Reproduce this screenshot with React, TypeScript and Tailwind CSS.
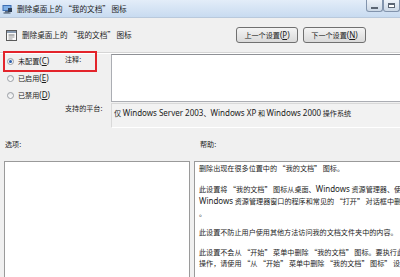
import React from 'react';

// Latin runs are set a little larger than the CJK text, as in the screenshot
const T = ({ children }: { children: string }) => {
  const parts = children.split(/([A-Za-z0-9()][A-Za-z0-9() ]*[A-Za-z0-9()]|[A-Za-z0-9()])/);
  return (
    <>
      {parts.map((s, i) =>
        i % 2 === 1 ? (
          <span key={i} className="font-['Noto_Sans',sans-serif] text-[8px]">
            {s}
          </span>
        ) : (
          <React.Fragment key={i}>{s}</React.Fragment>
        )
      )}
    </>
  );
};

const Radio = ({ checked, label, k }: { checked?: boolean; label: string; k: string }) => (
  <div className="flex h-[14px] items-center gap-[4px]">
    <span className="flex h-[7px] w-[7px] shrink-0 items-center justify-center rounded-full border border-[#9a9ea4] bg-gradient-to-b from-[#e4e6e8] to-[#fdfdfd]">
      {checked && <span className="h-[3px] w-[3px] rounded-full bg-[#2a5fae]" />}
    </span>
    <span className="whitespace-nowrap">
      {label}
      <span className="font-['Noto_Sans',sans-serif] text-[8px]">
        (<span className="underline">{k}</span>)
      </span>
    </span>
  </div>
);

const TitleIcon = () => (
  <svg width="11" height="10" viewBox="0 0 11 10">
    <rect x="0.5" y="1" width="9" height="6" fill="#3d6eb3" />
    <rect x="1.5" y="2" width="7" height="4" fill="#7fb0e6" />
    <rect x="3" y="7" width="4" height="1.5" fill="#5b6b80" />
    <rect x="1.5" y="8.5" width="7" height="1" fill="#3b4a5e" />
    <rect x="6" y="4" width="4" height="4" fill="#2d3f57" />
  </svg>
);

const PolicyIcon = () => (
  <svg width="11" height="11" viewBox="0 0 11 11">
    <rect x="0.5" y="0.5" width="10" height="10" fill="#fbfbfb" stroke="#5a5a5a" />
    <rect x="1" y="1" width="9" height="2" fill="#8a9bb0" />
    <line x1="2.5" y1="5" x2="8.5" y2="5" stroke="#707070" />
    <line x1="2.5" y1="7" x2="8.5" y2="7" stroke="#9a9a9a" />
    <line x1="2.5" y1="9" x2="6.5" y2="9" stroke="#9a9a9a" />
  </svg>
);

const WinButton = ({ kind }: { kind: 'min' | 'max' }) => (
  <div className="flex h-[12px] w-[17px] items-center justify-center rounded-b-[3px] border border-t-0 border-[#8294ad] bg-gradient-to-b from-[#eef3f9] to-[#ccd8e6]">
    {kind === 'min' ? (
      <span className="mt-[4px] h-[2px] w-[7px] border border-[#5b6573] bg-white" />
    ) : (
      <span className="h-[5px] w-[7px] border border-[#5b6573] border-t-2 bg-white" />
    )}
  </div>
);

const HELP = [
  ['删除出现在很多位置中的 “我的文档” 图标。'],
  [
    '此设置将 “我的文档” 图标从桌面、Windows 资源管理器、使',
    'Windows 资源管理器窗口的程序和常见的 “打开” 对话框中删',
    '。',
  ],
  ['此设置不防止用户使用其他方法访问我的文档文件夹中的内容。'],
  [
    '此设置不会从 “开始” 菜单中删除 “我的文档” 图标。要执行此',
    '操作，请使用 “从 “开始” 菜单中删除 “我的文档” 图标” 设',
  ],
];

export default function App() {
  return (
    <div className="relative h-[277px] w-[400px] overflow-hidden bg-[#f0f0f0] font-['Noto_Sans_CJK_SC','Noto_Sans',sans-serif] text-[7.1px] text-[#1c1c1c]">
      {/* title bar */}
      <div className="flex h-[18px] items-start border-b border-[#b9c9dc] bg-gradient-to-b from-[#e3edf9] to-[#c8dbf0]">
        <div className="flex h-[17px] items-center pl-[2px]">
          <TitleIcon />
          <span className="ml-[4px] whitespace-nowrap text-[7.6px] leading-[10px]">删除桌面上的 “我的文档” 图标</span>
        </div>
        <div className="ml-auto flex">
          <WinButton kind="min" />
          <WinButton kind="max" />
        </div>
      </div>

      {/* header row */}
      <div className="flex h-[34px] items-center pl-[6px] pr-[34px]">
        <PolicyIcon />
        <span className="ml-[5px] whitespace-nowrap text-[7.6px]">删除桌面上的 “我的文档” 图标</span>
        <div className="ml-auto flex gap-[5px]">
          <button className="h-[16px] w-[62px] rounded-[3px] border border-[#707070] bg-gradient-to-b from-[#f4f4f4] to-[#dadada] leading-[14px]">
            上一个设置<span className="font-['Noto_Sans',sans-serif] text-[8px]">(<span className="underline">P</span>)</span>
          </button>
          <button className="h-[16px] w-[63px] rounded-[3px] border border-[#707070] bg-gradient-to-b from-[#f4f4f4] to-[#dadada] leading-[14px]">
            下一个设置<span className="font-['Noto_Sans',sans-serif] text-[8px]">(<span className="underline">N</span>)</span>
          </button>
        </div>
      </div>
      <div className="border-t border-b border-t-[#d5d5d5] border-b-white" />

      {/* state + comment */}
      <div className="flex w-[406px] flex-col">
        <div className="flex h-[48px]">
          <div className="flex w-[62px] shrink-0 flex-col gap-[3px] pl-[7px]">
            <Radio checked label="未配置" k="C" />
            <Radio label="已启用" k="E" />
            <Radio label="已禁用" k="D" />
          </div>
          <div className="w-[49px] shrink-0 pl-[3px] pt-[1px] leading-[8px]">注释:</div>
          <div className="flex-1 border border-[#abadb3] border-t-[#8e9095] bg-white" />
        </div>
        <div className="mt-[1px] flex h-[25px]">
          <div className="w-[62px] shrink-0" />
          <div className="w-[49px] shrink-0 whitespace-nowrap pl-[3px] pt-[1px] leading-[8px]">支持的平台:</div>
          <div className="flex-1 whitespace-nowrap border border-[#d9d9d9] border-b-white bg-[#f2f2f2] pl-[2px] pt-[3px] leading-[11px]">
            <T>仅 Windows Server 2003、Windows XP 和 Windows 2000 操作系统</T>
          </div>
        </div>
      </div>

      {/* section labels */}
      <div className="flex h-[33px] items-center">
        <div className="w-[194px] shrink-0 pl-[5px]">选项:</div>
        <div className="pl-[6px]">帮助:</div>
      </div>

      {/* options + help */}
      <div className="flex w-[480px] gap-[4px] pl-[4px]">
        <div className="h-[130px] w-[186px] shrink-0 border border-[#9a9a9a] bg-white" />
        <div className="h-[130px] w-[280px] shrink-0 border border-[#9a9a9a] bg-white pl-[4px] pt-[1px] leading-[11.5px]">
          {HELP.map((p, i) => (
            <div key={i} className="mb-[8px]">
              {p.map((line, j) => (
                <div key={j} className="whitespace-nowrap">
                  <T>{line}</T>
                </div>
              ))}
            </div>
          ))}
        </div>
      </div>

      {/* red annotation box */}
      <div className="absolute left-[3px] top-[51px] h-[21px] w-[94px] border-2 border-[#e3242b]" />
    </div>
  );
}
